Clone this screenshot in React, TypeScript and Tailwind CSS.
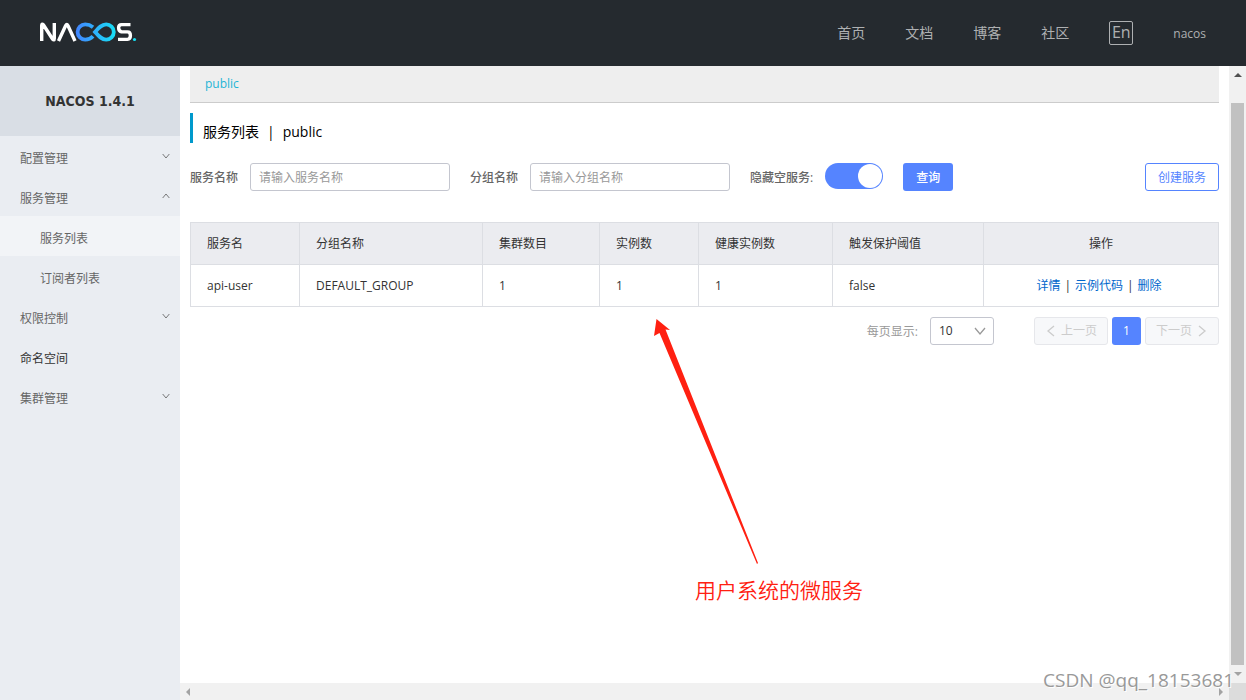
import React from "react";

const SANS = "font-['Open_Sans','Noto_Sans_CJK_SC',sans-serif]";

const navLinks = ["首页", "文档", "博客", "社区"];

type MenuItem = { label: string; open?: boolean; leaf?: boolean; children?: string[] };

const menu: MenuItem[] = [
  { label: "配置管理" },
  { label: "服务管理", open: true, children: ["服务列表", "订阅者列表"] },
  { label: "权限控制" },
  { label: "命名空间", leaf: true },
  { label: "集群管理" },
];

const services = [
  { name: "api-user", group: "DEFAULT_GROUP", clusters: 1, instances: 1, healthy: 1, protect: "false" },
];

function Chevron({ dir, className }: { dir: "up" | "down" | "left" | "right"; className: string }) {
  const points = {
    up: "1,9 6,3 11,9",
    down: "1,3 6,9 11,3",
    left: "9,1 3,6 9,11",
    right: "3,1 9,6 3,11",
  }[dir];
  return (
    <svg viewBox="0 0 12 12" className={className} fill="none" stroke="currentColor" strokeWidth="1.3" aria-hidden="true">
      <polyline points={points} />
    </svg>
  );
}

function Logo() {
  return (
    <svg width="98" height="32" viewBox="0 -6 98 32" role="img" aria-label="NACOS">
      <defs>
        <linearGradient id="loop" gradientUnits="userSpaceOnUse" x1="36" y1="0" x2="76" y2="0">
          <stop offset="0" stopColor="#4385ff" />
          <stop offset="1" stopColor="#16e0f5" />
        </linearGradient>
      </defs>
      <g fill="none" stroke="#fff" strokeWidth="3.400" strokeLinejoin="round">
        <path d="M1.700 19V3.500Q1.700 1 3.500 3L12.500 17Q14.300 19 14.300 16.500V1" />
        <path d="M18.500 19L25.700 3.500Q26.800 1.500 27.900 3.500L35 19" />
        <path d="M90.500 2.600H81.500Q78.600 2.600 78.600 5.800T81.500 9.900H87.500Q90.400 9.900 90.400 13.600T87.500 17.400H78" />
      </g>
      <g fill="none" stroke="url(#loop)" strokeWidth="3.800">
        <path d="M53 5.200C50 2.800 48 2.400 45.200 2.400a7.600 7.600 0 0 0 0 15.200C48 17.600 50.500 17 53 14.200" />
        <path d="M55 10C58.500 6 61.500 2.400 66.200 2.400a7.600 7.600 0 0 1 0 15.200C61.500 17.600 58.500 14 55 10z" />
      </g>
      <circle cx="94.500" cy="17.500" r="1.600" fill="#16e0f5" />
    </svg>
  );
}

function TopBar() {
  return (
    <header className="flex h-[66px] shrink-0 items-center justify-between bg-[#252a2f] px-10 text-[#aeb0b2]">
      <a href="#home" className="-mt-0.5">
        <Logo />
      </a>
      <nav className="flex items-center gap-10 text-sm">
        {navLinks.map((l) => (
          <a key={l} href="#nav">{l}</a>
        ))}
        <button className="flex size-6 items-center justify-center rounded-xs border border-[#aeb0b2] pb-0.5 text-base leading-5">
          En
        </button>
        <a href="#user" className="pt-0.5 text-xs font-medium">nacos</a>
      </nav>
    </header>
  );
}

function Sidebar() {
  return (
    <aside className="w-[180px] shrink-0 bg-[#eaedf2] text-xs text-[#666]">
      <h1 className="flex h-[70px] items-center justify-center bg-[#d9dee5] font-['DejaVu_Sans_Condensed','DejaVu_Sans',sans-serif] text-sm font-bold text-[#333]">
        NACOS 1.4.1
      </h1>
      <ul>
        {menu.map((m) => (
          <li key={m.label}>
            <a
              href="#menu"
              className={"flex h-10 items-center justify-between pr-2.5 pl-5 " + (m.leaf ? "text-[#333]" : "")}
            >
              <span className="pt-1.5">{m.label}</span>
              {!m.leaf && <Chevron dir={m.open ? "up" : "down"} className="size-2 text-[#666]" />}
            </a>
            {m.children && (
              <ul>
                {m.children.map((c, i) => (
                  <li key={c}>
                    <a href="#menu" className={"flex h-10 items-center pt-1.5 pl-10 " + (i === 0 ? "bg-[#f2f4f7]" : "")}>
                      {c}
                    </a>
                  </li>
                ))}
              </ul>
            )}
          </li>
        ))}
      </ul>
    </aside>
  );
}

function SearchForm() {
  const input =
    "h-7 w-[200px] rounded-[3px] border border-[#c4c6cf] px-2 text-xs text-[#333] outline-none placeholder:text-[#999]";
  return (
    <form className="mt-5 flex items-center text-xs text-[#666]" onSubmit={(e) => e.preventDefault()}>
      <label htmlFor="service" className="mr-3 pt-0.5 font-medium">服务名称</label>
      <input id="service" className={input} placeholder="请输入服务名称" />
      <label htmlFor="group" className="mr-3 ml-5 pt-0.5 font-medium">分组名称</label>
      <input id="group" className={input} placeholder="请输入分组名称" />
      <label htmlFor="hide" className="mr-3 ml-5 pt-0.5 font-medium">隐藏空服务:</label>
      <input
        id="hide"
        type="checkbox"
        role="switch"
        defaultChecked
        className="mb-0.5 flex h-[26px] w-[58px] appearance-none items-center rounded-full bg-[#5584ff] px-px before:size-6 before:rounded-full before:bg-white checked:justify-end"
      />
      <button className="ml-5 h-7 w-[50px] rounded-[3px] bg-[#5584ff] pt-0.5 font-medium text-white">查询</button>
      <button type="button" className="ml-auto h-7 w-[74px] rounded-[3px] border border-[#5584ff] pt-0.5 text-[#5584ff]">
        创建服务
      </button>
    </form>
  );
}

function ServiceTable() {
  const th = "h-[42px] border border-[#dcdee3] bg-[#ebecf0] px-4 text-left font-normal";
  const td = "h-[42px] border border-[#dcdee3] px-4";
  return (
    <table className="mt-[31px] w-full table-fixed border-collapse text-xs text-[#333]">
      <thead>
        <tr>
          <th className={th + " w-[109px]"}>服务名</th>
          <th className={th + " w-[183px]"}>分组名称</th>
          <th className={th + " w-[117px]"}>集群数目</th>
          <th className={th + " w-[99px]"}>实例数</th>
          <th className={th + " w-[134px]"}>健康实例数</th>
          <th className={th + " w-[151px]"}>触发保护阈值</th>
          <th className="h-[42px] border border-[#dcdee3] bg-[#ebecf0] px-4 text-center font-normal">操作</th>
        </tr>
      </thead>
      <tbody>
        {services.map((s) => (
          <tr key={s.name}>
            <td className={td}>{s.name}</td>
            <td className={td}>{s.group}</td>
            <td className={td}>{s.clusters}</td>
            <td className={td}>{s.instances}</td>
            <td className={td}>{s.healthy}</td>
            <td className={td}>{s.protect}</td>
            <td className="h-[42px] border border-[#dcdee3] pr-5 pl-4">
              <div className="flex justify-center gap-1">
                <a href="#detail" className="text-[#0066cc]">详情</a>
                <span>|</span>
                <a href="#code" className="text-[#0066cc]">示例代码</a>
                <span>|</span>
                <a href="#delete" className="text-[#0066cc]">删除</a>
              </div>
            </td>
          </tr>
        ))}
      </tbody>
    </table>
  );
}

function Pager() {
  const off =
    "flex h-7 w-[74px] items-center justify-center gap-1 rounded-[3px] border border-[#e6e7eb] bg-[#f7f8fa] text-[#ccc]";
  return (
    <div className="mt-2.5 flex items-center justify-end text-xs">
      <label htmlFor="size" className="mr-3 pt-0.5 text-[#999]">每页显示:</label>
      <div className="relative mr-10">
        <select
          id="size"
          className="h-7 w-16 appearance-none rounded-[3px] border border-[#c4c6cf] bg-white pl-2 text-[#333]"
        >
          <option>10</option>
        </select>
        <Chevron dir="down" className="pointer-events-none absolute top-2 right-2 size-3 text-[#999]" />
      </div>
      <div className="flex gap-1">
        <button className={off} disabled>
          <Chevron dir="left" className="size-3" />
          上一页
        </button>
        <button className="h-7 w-[29px] rounded-[3px] bg-[#5584ff] text-white">1</button>
        <button className={off} disabled>
          下一页
          <Chevron dir="right" className="size-3" />
        </button>
      </div>
    </div>
  );
}

function Annotation() {
  return (
    <div className="pointer-events-none absolute top-[252px] left-[472px] text-[#ff2011]">
      <svg width="108" height="248" viewBox="0 0 108 248" fill="currentColor" aria-hidden="true">
        <path d="M4.500 1L18 12L13.500 11.500L106 245L105 246L7.500 15L2 18Z" />
      </svg>
      <p className="mt-2 ml-[43px] text-[21px] leading-8 font-[350] whitespace-nowrap">用户系统的微服务</p>
    </div>
  );
}

function Triangle({ points, className }: { points: string; className: string }) {
  return (
    <svg width="8" height="8" viewBox="0 0 8 8" fill="currentColor" className={className} aria-hidden="true">
      <polygon points={points} />
    </svg>
  );
}

export default function App() {
  return (
    <div className={SANS + " relative flex min-h-screen flex-col bg-white"}>
      <TopBar />
      <div className="flex grow">
        <Sidebar />
        <div className="flex min-w-0 grow flex-col">
          <div className="flex grow">
            <main className="relative min-w-0 grow px-2.5">
              <div className="flex h-[37px] items-center border-b border-[#ccc] bg-[#eee] px-[15px] text-xs text-[#1fb5d6]">
                <a href="#public">public</a>
              </div>
              <h2 className="mt-2.5 flex h-[30px] items-center gap-2 border-l-3 border-[#09c] pt-2 pl-2.5 text-sm text-black">
                <span>服务列表</span>
                <span>|</span>
                <span>public</span>
              </h2>
              <SearchForm />
              <ServiceTable />
              <Pager />
              <Annotation />
            </main>
            <div className="flex w-[17px] shrink-0 flex-col items-center bg-[#f1f1f1]">
              <Triangle points="0,6 4,2 8,6" className="my-[5px] text-[#505050]" />
              <div className="mt-[19px] w-[13px] grow bg-[#c1c1c1]" />
              <Triangle points="0,2 4,6 8,2" className="my-[5px] text-[#a3a3a3]" />
            </div>
          </div>
          <div className="flex h-[17px] items-center bg-[#f1f1f1] text-[#a3a3a3]">
            <Triangle points="6,0 2,4 6,8" className="ml-1" />
            <Triangle points="2,0 6,4 2,8" className="mr-1 ml-auto" />
            <div className="h-full w-[17px] bg-[#dcdcdc]" />
          </div>
        </div>
      </div>
      <p className="pointer-events-none absolute right-3 bottom-1.5 text-[19px] leading-7 text-[#999] [text-shadow:1px_1px_0_#fff]">
        CSDN @qq_18153681
      </p>
    </div>
  );
}
